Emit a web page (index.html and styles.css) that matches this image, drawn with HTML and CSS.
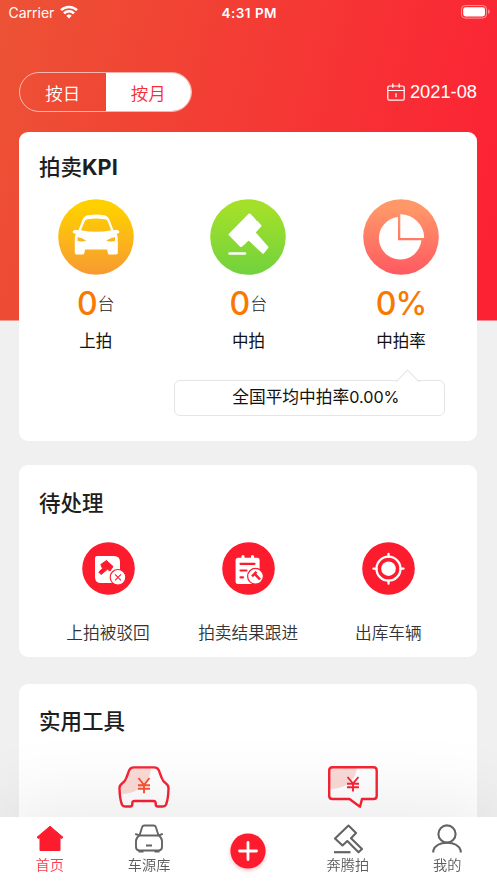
FILE: index.html
```html
<!DOCTYPE html>
<html lang="zh-CN">
<head>
<meta charset="utf-8">
<meta name="viewport" content="width=device-width, initial-scale=1">
<title>拍卖KPI</title>
<link rel="stylesheet" href="styles.css">
</head>
<body>
<div class="app">
  <div class="status">
    <div class="carrier"><span>Carrier</span>
      <svg width="18" height="14" viewBox="0 0 18 14" fill="none" stroke="#fff" stroke-width="2.5"><path d="M1 5.2a11.5 11.5 0 0 1 16 0M4 8.4a7.1 7.1 0 0 1 10 0"/><path d="M6.3 10.7a3.9 3.9 0 0 1 5.4 0L9 13.5z" fill="#fff" stroke="none"/></svg>
    </div>
    <div class="time">4:31 PM</div>
    <div class="battery">
      <svg width="29" height="14" viewBox="0 0 29 14"><rect x=".5" y=".5" width="25" height="12.6" rx="3.8" fill="none" stroke="#fff" stroke-opacity=".5"/><rect x="2.2" y="2.2" width="21.8" height="9.2" rx="2.3" fill="#fff"/><path d="M27.2 4.6c2 .7 2 3.7 0 4.4z" fill="#fff" fill-opacity=".55"/></svg>
    </div>
  </div>

  <div class="filter">
    <div class="switch"><span>按日</span><span class="on">按月</span></div>
    <div class="date">
      <svg width="18" height="18" viewBox="0 0 18 18" fill="none" stroke="#fff" stroke-width="1.2"><rect x=".8" y="3" width="16.4" height="14.2" rx="1.6"/><path d="M.8 7.5h16.4M5.8.5v4.3M12.2.5v4.3M9 10.2v4"/></svg>
      <span>2021-08</span>
    </div>
  </div>

  <section class="card kpi">
    <h2>拍卖<b>KPI</b></h2>
    <div class="kpi-row">
      <div class="kpi-item">
        <svg width="76" height="76" viewBox="0 0 76 76">
          <defs><linearGradient id="gy" x2="0" y2="1"><stop offset=".1" stop-color="#ffd000"/><stop offset="1" stop-color="#f79a33"/></linearGradient></defs>
          <circle cx="38" cy="38" r="37.8" fill="url(#gy)"/>
          <path fill="#fff" fill-rule="evenodd" d="M20.5 31.2 24.6 20.4Q26 17 30 16.2Q38 14.8 46 16.2Q50 17 51.4 20.4L55.5 31.2Q60 29.8 61.3 32.5Q61.5 34.6 58.6 34.8Q59.8 37 59.8 40V53.8Q59.8 55.5 58 55.5H51.5Q50 55.5 49.8 54L49.2 50.5H27L26.4 54Q26.2 55.5 24.5 55.5H18.5Q16.8 55.5 16.8 53.8V40Q16.8 37 17.8 34.8Q14.5 34.6 14.7 32.5Q16 29.8 20.5 31.2ZM23 31.2Q38 34.5 53.2 31.2L49.8 22.5Q49 20.5 47 20.2Q38 19 29.5 20.2Q27.3 20.5 26.6 22.5ZM19.6 38.5V42Q24 43 28.3 41.8Q25 39 19.6 38ZM57 38.5V42Q52.5 43 48.2 41.8Q51.5 39 57 38Z"/>
        </svg>
        <div class="num">0<small>台</small></div>
        <div class="label">上拍</div>
      </div>
      <div class="kpi-item">
        <svg width="76" height="76" viewBox="0 0 76 76">
          <defs><linearGradient id="gg" x2="0" y2="1"><stop offset=".1" stop-color="#a4e02a"/><stop offset="1" stop-color="#71d23d"/></linearGradient></defs>
          <circle cx="38" cy="38" r="37.8" fill="url(#gg)"/>
          <g fill="#fff" stroke="#fff" stroke-width="2.4" stroke-linejoin="round" stroke-linecap="round"><path d="M39.5 15.7 44.3 20.5Q45 22.7 47 23.2L50.3 26.8 44.2 33.5 57.2 48.3 53 53.5 38.7 40 36.600 41.800Q35.500 42 35 43.500L31 46.800 19.800 35.500Z"/><path d="M19.500 54.500H35" fill="none"/></g>
        </svg>
        <div class="num">0<small>台</small></div>
        <div class="label">中拍</div>
      </div>
      <div class="kpi-item">
        <svg width="76" height="76" viewBox="0 0 76 76">
          <defs><linearGradient id="gr" x2="0" y2="1"><stop offset=".1" stop-color="#ff9868"/><stop offset="1" stop-color="#ff5961"/></linearGradient></defs>
          <circle cx="38" cy="38" r="37.8" fill="url(#gr)"/>
          <path fill="#fff" d="M35 18V41.2H58.4A21.3 21.3 0 1 1 35 18ZM37.3 15.2A23.8 23.8 0 0 1 61.2 39H37.3Z"/>
        </svg>
        <div class="num">0%</div>
        <div class="label">中拍率</div>
      </div>
    </div>
    <div class="bubble">全国平均中拍率<span>0.00%</span></div>
  </section>

  <section class="card todo">
    <h2>待处理</h2>
    <div class="todo-row">
      <div class="todo-item">
        <svg width="53" height="53" viewBox="0 0 53 53"><circle cx="26.5" cy="26.5" r="26.3" fill="#fd1c2d"/>
          <path d="M15 14H32Q38 14 38 20V41H19Q13 41 13 35V16Q13 14 15 14Z" fill="#fff"/>
          <path d="M24.5 18.5 31 24.5 28 29 25.5 27.3 19 32.5 16.8 30 20.5 26.5 18.8 22.5Z" fill="#fd1c2d" stroke="#fd1c2d" stroke-linejoin="round"/>
          <circle cx="36" cy="35.3" r="7.8" fill="#fff" stroke="#fd1c2d" stroke-width="1.2"/>
          <path d="m33 32.3 6 6m0-6-6 6" stroke="#fd1c2d" stroke-width="1.1"/></svg>
        <div>上拍被驳回</div>
      </div>
      <div class="todo-item">
        <svg width="53" height="53" viewBox="0 0 53 53"><circle cx="26.5" cy="26.5" r="26.3" fill="#fd1c2d"/>
          <rect x="13.6" y="15.7" width="24" height="26.3" rx="2.5" fill="#fff"/>
          <path d="M21 14.5v4M30.5 14.5v4" stroke="#fff" stroke-width="3.2" stroke-linecap="round"/>
          <path d="M18.5 21.8H32.5M18.5 28.5H24.5M18.5 35.3H21" stroke="#fd1c2d" stroke-width="2.2" stroke-linecap="round"/>
          <circle cx="33.5" cy="34.3" r="7.9" fill="#fff" stroke="#fd1c2d" stroke-width="1.2"/>
          <path d="m30 34.3 4.5-4.5M32.5 31.7 38 37.5" stroke="#fd1c2d" stroke-width="2.5"/></svg>
        <div>拍卖结果跟进</div>
      </div>
      <div class="todo-item">
        <svg width="53" height="53" viewBox="0 0 53 53"><circle cx="26.5" cy="26.5" r="26.3" fill="#fd1c2d"/>
          <circle cx="26.5" cy="26.7" r="7.3" fill="#fff"/><g fill="none" stroke="#fff" stroke-width="2.3" stroke-linecap="round"><circle cx="26.5" cy="26.7" r="12"/><path d="M26.5 11.8v3M26.5 38.7v3M11.5 26.7h3M38.5 26.7h3"/></g></svg>
        <div>出库车辆</div>
      </div>
    </div>
  </section>

  <section class="card tools">
    <h2>实用工具</h2>
    <div class="tools-row">
      <svg width="52" height="42" viewBox="0 0 52 42">
        <path d="M2 28V20L8 14 12 3 16 2H33Q31 26 4 28Z" fill="#fadbd7"/>
        <path d="M16 1.4H36Q39.5 1.4 40.8 4.2L43.5 11.5Q44.8 15.5 48 17.5Q50.8 19.5 50.5 23Q50.2 33 48 38.8Q47.2 40.5 45 40.5H39.7Q38 40.5 37.7 38.5V37Q37.5 35 35.5 35H16.5Q14.5 35 14.3 37V38.5Q14 40.5 12.3 40.5H7Q4.8 40.5 4 38.8Q1.8 33 1.5 23Q1.2 19.5 4 17.5Q7.2 15.5 8.5 11.5L11.2 4.2Q12.5 1.4 16 1.4Z" fill="none" stroke="#f72336" stroke-width="2.4"/>
        <path d="m20.5 12 5.5 7 5.5-7M20 19.3H32M20 22.8H32M26 19V27.3" fill="none" stroke="#fa5332" stroke-width="1.9"/>
      </svg>
      <svg width="50" height="42" viewBox="0 0 50 42">
        <path d="M2 23V2H29Q26 22 2 23Z" fill="#fadbd7"/>
        <path d="M4.5 1.2H45.5Q48.7 1.2 48.7 4.5V30Q48.7 33 45.5 33H34L32 40.7 21.5 33H4.5Q1.2 33 1.2 30V4.5Q1.2 1.2 4.5 1.2Z" fill="none" stroke="#f72336" stroke-width="2.4" stroke-linejoin="round"/>
        <path d="m19.5 11 5.5 6.5 5.5-6.5M19 17.8H31M19 21.3H31M25 17.5V25.5" fill="none" stroke="#f72336" stroke-width="1.9"/>
      </svg>
    </div>
  </section>

  <nav class="tabs">
    <div class="tab active">
      <svg width="30" height="30" viewBox="0 0 30 30"><path d="M15 2.2 28 13.3 26.5 14.5 25 13.5V26.5H5V13.5L3.5 14.5 2 13.3Z" fill="#fd1c2d" stroke="#fd1c2d" stroke-width="1" stroke-linejoin="round"/></svg>
      <span>首页</span>
    </div>
    <div class="tab">
      <svg width="30" height="30" viewBox="0 0 30 30" fill="none" stroke="#646464" stroke-width="1.9" stroke-linejoin="round"><path d="M5.5 11.5 8 3.5Q8.5 1.5 10.5 1.5H19.5Q21.5 1.5 22 3.5L24.5 11.5M1.2 9.8 5.5 11.5H24.5L28.8 9.8M5.5 11.5Q2 13.5 2 17V23Q2 26 5 26.5H25Q28 26 28 23V17Q28 13.5 24.5 11.5"/><path d="M12 21.5H18M4.5 27.5H9.5M20.5 27.5H25.5" stroke-width="2"/></svg>
      <span>车源库</span>
    </div>
    <div class="tab add"><svg width="36" height="36" viewBox="0 0 36 36"><circle cx="18" cy="18" r="17.6" fill="#fd1c2d"/><path d="M18 9.5v17M9.5 18h17" stroke="#fff" stroke-width="2.8" stroke-linecap="round"/></svg></div>
    <div class="tab">
      <svg width="30" height="30" viewBox="0 0 30 30" fill="none" stroke="#646464" stroke-width="2.1" stroke-linejoin="round"><path d="M15.5 1.5 23 9 18 14.3 29 25 25.5 28.3 14.3 17 9.5 21.5 2 14.5Z"/><path d="M1 28.2H17.5" stroke-width="2.2"/></svg>
      <span>奔腾拍</span>
    </div>
    <div class="tab">
      <svg width="30" height="30" viewBox="0 0 30 30" fill="none" stroke="#646464" stroke-width="2.1"><circle cx="15" cy="10" r="8.6"/><path d="M1.3 28.5V26.5Q4 18.7 15 18.7T28.7 26.5V28.5"/></svg>
      <span>我的</span>
    </div>
  </nav>
</div>
</body>
</html>
```

FILE: styles.css
```css
* { box-sizing: border-box; }

body {
  margin: 0;
  background: #f0f0f0;
  font-family: "Noto Sans CJK SC", sans-serif;
  color: #111;
}

svg { display: block; flex: none; }

.app {
  height: 883px;
  overflow: hidden;
  display: flex;
  flex-direction: column;
  background: linear-gradient(105deg, #ec5335 0%, #fc2234 95%) no-repeat 0 0 / 100% 320.5px, #f0f0f0;
}

.status {
  flex: none;
  height: 26px;
  padding: 0 7px 0 8.5px;
  display: grid;
  grid-template-columns: 1fr auto 1fr;
  align-items: center;
  color: #fff;
  font: 400 14px/26px Inter, sans-serif;
}

.carrier { display: flex; align-items: center; gap: 6px; }
.carrier svg { margin-top: -2px; }
.time { font-weight: 600; font-size: 13.5px; letter-spacing: .5px; }
.battery { justify-self: end; margin-top: -2px; }

.filter {
  flex: none;
  margin: 46px 20px 20px 19px;
  height: 40px;
  display: flex;
  align-items: center;
  justify-content: space-between;
  color: #fff;
}

.switch {
  display: flex;
  width: 173px;
  height: 40px;
  border: 1px solid rgba(255, 255, 255, .6);
  border-radius: 20px;
  overflow: hidden;
  font-size: 17.5px;
  font-weight: 350;
  line-height: 40px;
  text-align: center;
}
.switch span { flex: 1; }
.switch .on { background: #fff; color: #fb2b38; }

.date {
  display: flex;
  align-items: center;
  gap: 5px;
  font: 400 18.3px/40px "Liberation Sans", sans-serif;
}

.card {
  flex: none;
  margin: 0 19.6px 0 19.4px;
  padding: 0 20px 0 19.6px;
  background: #fff;
  border-radius: 9px;
}

h2 {
  margin: 0;
  font-size: 21.5px;
  line-height: 32px;
  font-weight: 500;
  color: #1e1e1e;
}
h2 b { font-family: Inter, sans-serif; font-weight: 700; font-size: 21.7px; }

.kpi { height: 308.5px; padding-top: 17.5px; margin-bottom: 24.5px; }
.kpi-row { display: grid; grid-template-columns: repeat(3, 1fr); margin: 16px -20px 0 -19.6px; }
.kpi-item { display: flex; flex-direction: column; align-items: center; }
.num {
  height: 40px;
  margin-top: 9px;
  display: flex;
  align-items: center;
  font-family: Inter, sans-serif;
  font-size: 32px;
  line-height: 40px;
  font-weight: 500;
  letter-spacing: -1px;
  color: #f97800;
}
.num small {
  margin: -2px 0 0 1px;
  font-family: "Noto Sans CJK SC", sans-serif;
  font-size: 17px;
  font-weight: 300;
  letter-spacing: 0;
  color: #222;
}
.label { margin-top: 4px; font-size: 16.5px; line-height: 24px; color: #111; }

.bubble {
  position: relative;
  width: 271px;
  height: 36px;
  margin: 28.5px 12.5px 0 auto;
  padding-left: 13px;
  border: 1px solid #e5e5e5;
  border-radius: 6px;
  font-size: 16.7px;
  line-height: 30px;
  text-align: center;
}
.bubble span { font-family: Inter, sans-serif; font-size: 16.2px; }
.bubble::before {
  content: "";
  position: absolute;
  top: -8.5px;
  right: 28px;
  width: 16px;
  height: 16px;
  border: solid #e5e5e5;
  border-width: 1px 0 0 1px;
  background: linear-gradient(135deg, #fff 50%, transparent 50%);
  transform: rotate(45deg);
}

.todo { height: 192px; padding-top: 21.4px; margin-bottom: 27px; }
.todo-row { display: grid; grid-template-columns: repeat(3, 1fr); margin: 23.8px -1px 0; }
.todo-item {
  display: flex;
  flex-direction: column;
  align-items: center;
  gap: 25px;
  font-size: 16.7px;
  line-height: 24px;
  font-weight: 350;
  color: #333;
  white-space: nowrap;
}

.tools { height: 220px; padding-top: 20.4px; }
.tools-row { display: grid; grid-template-columns: 1fr 1fr; justify-items: center; margin-top: 29.8px; }

.tabs {
  position: fixed;
  left: 0;
  right: 0;
  bottom: 0;
  height: 66.5px;
  display: grid;
  grid-template-columns: repeat(5, 1fr);
  background: #fff;
  box-shadow: 0 -8px 80px rgba(0, 0, 0, .1);
}
.tab {
  display: flex;
  flex-direction: column;
  align-items: center;
  padding-top: 7px;
  font-size: 14.2px;
  line-height: 22px;
  font-weight: 350;
  color: #5c5c5c;
}
.tab span { margin-top: -.5px; }
.active { color: #fd3c4b; }
.add { padding-top: 16.5px; }
.add svg { filter: drop-shadow(0 2px 2px rgba(253, 28, 45, .25)); }
```
